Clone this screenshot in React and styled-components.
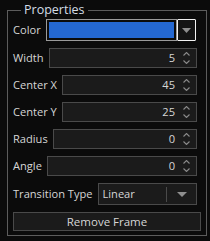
import React from 'react';
import styled, { createGlobalStyle } from 'styled-components';

const GlobalStyle = createGlobalStyle`
  html, body {
    margin: 0;
    padding: 0;
    background: #0b0b0b;
  }
  body {
    font-family: "Open Sans", "Noto Sans", sans-serif;
  }
`;

const Panel = styled.div`
  width: 210px;
  height: 241px;
  box-sizing: border-box;
  padding: 2px 3px 5px 7px;
  background: #0b0b0b;
  color: #d6d6d6;
  font-size: 11.1px;
`;

const Group = styled.fieldset`
  margin: 0;
  height: 100%;
  box-sizing: border-box;
  border: 1px solid #5c5c5c;
  padding: 1px 9px 0 5px;
  display: flex;
  flex-direction: column;
  gap: 7px;
`;

const Legend = styled.legend`
  margin-left: 8px;
  padding: 0 3px;
  font-size: 12.5px;
  line-height: 16px;
  color: #d4dde6;
`;

const Row = styled.div`
  display: flex;
  align-items: center;
  gap: 5px;
  height: ${p => p.$h || 20}px;
`;

const Label = styled.span`
  white-space: nowrap;
  line-height: 14px;
`;

const Swatch = styled.div`
  flex: 1;
  height: 100%;
  box-sizing: border-box;
  border: 1px solid #9a9a9a;
  padding: 2px;
  background: #0b0b0b;
  & > div {
    width: 100%;
    height: 100%;
    background: ${p => p.$color};
  }
`;

const PickButton = styled.div`
  width: 19px;
  height: 100%;
  box-sizing: border-box;
  margin-left: -5px;
  margin-right: 1px;
  border: 1px solid #f2f2f2;
  border-radius: 1px;
  background: #141414;
  display: flex;
  align-items: center;
  justify-content: center;
`;

const Field = styled.div`
  flex: 1;
  height: 100%;
  box-sizing: border-box;
  border: 1px solid #4a4a4a;
  background: #1b1b1b;
  display: flex;
  align-items: center;
  justify-content: flex-end;
  padding-right: 6px;
`;

const Value = styled.span`
  line-height: 14px;
  margin-right: 7px;
`;

const Spinner = styled.div`
  display: flex;
  flex-direction: column;
  gap: 4px;
  width: 8px;
  align-items: center;
`;

const Select = styled.div`
  flex: 1;
  height: 100%;
  box-sizing: border-box;
  border: 1px solid #4a4a4a;
  background: #1b1b1b;
  display: flex;
  align-items: center;
  padding-left: 4px;
`;

const SelectText = styled.span`
  flex: 1;
  line-height: 14px;
`;

const Divider = styled.div`
  width: 1px;
  height: 15px;
  background: #4a4a4a;
`;

const Caret = styled.div`
  width: 29px;
  display: flex;
  justify-content: center;
`;

const Button = styled.div`
  height: 19px;
  box-sizing: border-box;
  margin-right: -4px;
  border: 1px solid #4a4a4a;
  background: #1b1b1b;
  display: flex;
  align-items: center;
  justify-content: center;
  line-height: 14px;
  font-size: 11.5px;
`;

const Triangle = ({ w = 9, h = 5, color = '#8e8e8e' }) => (
  <svg width={w} height={h} viewBox={`0 0 ${w} ${h}`}>
    <polygon points={`0,0 ${w},0 ${w / 2},${h}`} fill={color} />
  </svg>
);

const Chevron = ({ up }) => (
  <svg width="7" height="4" viewBox="0 0 7 4">
    <polyline
      points={up ? '0.5,3.5 3.5,0.5 6.5,3.5' : '0.5,0.5 3.5,3.5 6.5,0.5'}
      fill="none"
      stroke="#8a8a8a"
      strokeWidth="1.1"
    />
  </svg>
);

const numbers = [
  { label: 'Width', value: 5 },
  { label: 'Center X', value: 45 },
  { label: 'Center Y', value: 25 },
  { label: 'Radius', value: 0 },
  { label: 'Angle', value: 0 },
];

export default function App() {
  return (
    <>
      <GlobalStyle />
      <Panel>
        <Group>
          <Legend>Properties</Legend>
          <Row $h={22}>
            <Label>Color</Label>
            <Swatch $color="#2468d2"><div /></Swatch>
            <PickButton>
              <Triangle />
            </PickButton>
          </Row>
          {numbers.map(n => (
            <Row key={n.label}>
              <Label>{n.label}</Label>
              <Field>
                <Value>{n.value}</Value>
                <Spinner>
                  <Chevron up />
                  <Chevron />
                </Spinner>
              </Field>
            </Row>
          ))}
          <Row $h={22}>
            <Label>Transition Type</Label>
            <Select>
              <SelectText>Linear</SelectText>
              <Divider />
              <Caret>
                <Triangle w={10} h={5} />
              </Caret>
            </Select>
          </Row>
          <Button>Remove Frame</Button>
        </Group>
      </Panel>
    </>
  );
}
